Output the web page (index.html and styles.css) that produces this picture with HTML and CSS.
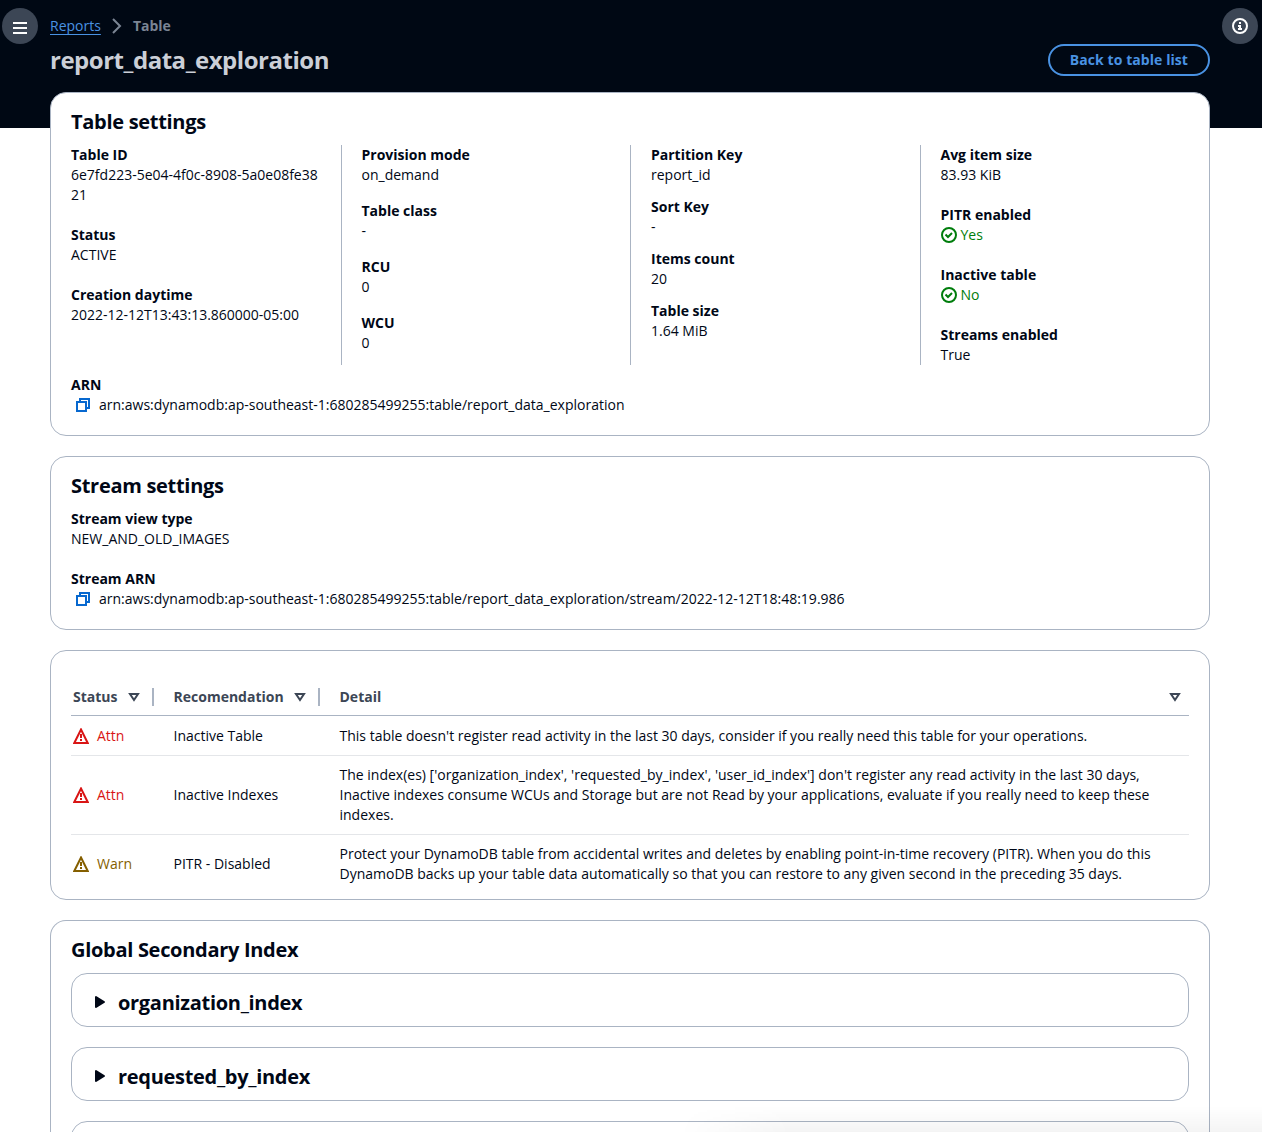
FILE: index.html
```html
<!DOCTYPE html>
<html lang="en">
<head>
<meta charset="utf-8">
<title>report_data_exploration</title>
<link rel="stylesheet" href="styles.css">
</head>
<body>
<svg class="defs" width="0" height="0" aria-hidden="true">
  <symbol id="copy" viewBox="0 0 16 16"><path d="M2 5h9v9H2z"/><path d="M5 5V2h9v9h-3"/></symbol>
  <symbol id="check" viewBox="0 0 16 16"><circle cx="8" cy="8" r="7"/><path d="m4.5 7.5 2.5 2.5 4-4"/></symbol>
  <symbol id="warning" viewBox="0 0 16 16"><path d="m8 1.5 6.7 13.5H1.3L8 1.5Z"/><path d="M8 11v2M8 6v4"/></symbol>
  <symbol id="sort" viewBox="0 0 16 16"><path d="M4 5h8l-4 6-4-6Z"/></symbol>
  <symbol id="caret" viewBox="0 0 16 16"><path d="M4 3v10l8-5z"/></symbol>
</svg>
<header class="top">
  <button class="round menu" aria-label="Open navigation"><svg class="ico" viewBox="0 0 16 16"><path d="M1 3h14M1 8h14M1 13h14"/></svg></button>
  <div class="top-main">
    <nav class="crumbs"><a href="#">Reports</a><svg class="ico" viewBox="0 0 16 16"><path d="m4 1 7 7-7 7"/></svg><b>Table</b></nav>
    <div class="title-row"><h1>report_data_exploration</h1><button class="back">Back to table list</button></div>
  </div>
  <button class="round" aria-label="Open help"><svg class="ico" viewBox="0 0 16 16"><circle cx="8" cy="8" r="7"/><path d="M8 11V8H6M6 11h4M8 4v2"/></svg></button>
</header>
<main>
  <section class="card">
    <h2>Table settings</h2>
    <div class="columns">
      <dl>
        <div><dt>Table ID</dt><dd>6e7fd223-5e04-4f0c-8908-5a0e08fe3821</dd></div>
        <div><dt>Status</dt><dd>ACTIVE</dd></div>
        <div><dt>Creation daytime</dt><dd>2022-12-12T13:43:13.860000-05:00</dd></div>
      </dl>
      <dl class="medium">
        <div><dt>Provision mode</dt><dd>on_demand</dd></div>
        <div><dt>Table class</dt><dd>-</dd></div>
        <div><dt>RCU</dt><dd>0</dd></div>
        <div><dt>WCU</dt><dd>0</dd></div>
      </dl>
      <dl class="small">
        <div><dt>Partition Key</dt><dd>report_id</dd></div>
        <div><dt>Sort Key</dt><dd>-</dd></div>
        <div><dt>Items count</dt><dd>20</dd></div>
        <div><dt>Table size</dt><dd>1.64 MiB</dd></div>
      </dl>
      <dl>
        <div><dt>Avg item size</dt><dd>83.93 KiB</dd></div>
        <div><dt>PITR enabled</dt><dd class="ok"><svg class="ico"><use href="#check"/></svg>Yes</dd></div>
        <div><dt>Inactive table</dt><dd class="ok"><svg class="ico"><use href="#check"/></svg>No</dd></div>
        <div><dt>Streams enabled</dt><dd>True</dd></div>
      </dl>
    </div>
    <dl class="arn"><div><dt>ARN</dt><dd class="copy"><svg class="ico"><use href="#copy"/></svg>arn:aws:dynamodb:ap-southeast-1:680285499255:table/report_data_exploration</dd></div></dl>
  </section>
  <section class="card">
    <h2>Stream settings</h2>
    <dl>
      <div><dt>Stream view type</dt><dd>NEW_AND_OLD_IMAGES</dd></div>
      <div><dt>Stream ARN</dt><dd class="copy"><svg class="ico"><use href="#copy"/></svg>arn:aws:dynamodb:ap-southeast-1:680285499255:table/report_data_exploration/stream/2022-12-12T18:48:19.986</dd></div>
    </dl>
  </section>
  <section class="card findings">
    <table>
      <colgroup><col class="c-status"><col class="c-rec"><col></colgroup>
      <thead><tr>
        <th><div>Status<svg class="ico"><use href="#sort"/></svg></div></th>
        <th><div>Recomendation<svg class="ico"><use href="#sort"/></svg></div></th>
        <th><div>Detail<svg class="ico"><use href="#sort"/></svg></div></th>
      </tr></thead>
      <tbody>
        <tr><td><span class="state attn"><svg class="ico"><use href="#warning"/></svg>Attn</span></td><td>Inactive Table</td><td>This table doesn't register read activity in the last 30 days, consider if you really need this table for your operations.</td></tr>
        <tr><td><span class="state attn"><svg class="ico"><use href="#warning"/></svg>Attn</span></td><td>Inactive Indexes</td><td>The index(es) ['organization_index', 'requested_by_index', 'user_id_index'] don't register any read activity in the last 30 days, Inactive indexes consume WCUs and Storage but are not Read by your applications, evaluate if you really need to keep these indexes.</td></tr>
        <tr><td><span class="state warn"><svg class="ico"><use href="#warning"/></svg>Warn</span></td><td>PITR - Disabled</td><td>Protect your DynamoDB table from accidental writes and deletes by enabling point-in-time recovery (PITR). When you do this DynamoDB backs up your table data automatically so that you can restore to any given second in the preceding 35 days.</td></tr>
      </tbody>
    </table>
  </section>
  <section class="card indexes">
    <h2>Global Secondary Index</h2>
    <div class="index"><svg class="caret"><use href="#caret"/></svg>organization_index</div>
    <div class="index"><svg class="caret"><use href="#caret"/></svg>requested_by_index</div>
    <div class="index cut"></div>
  </section>
</main>
<div class="shade"></div>
</body>
</html>
```
FILE: styles.css
```css
* { box-sizing: border-box; }
body {
  margin: 0;
  height: 1132px;
  overflow: hidden;
  position: relative;
  background: linear-gradient(#000814 128px, #fff 128px);
  color: #000716;
  font: 14px/20px "Open Sans", sans-serif;
}
h1, h2, dl, dd { margin: 0; }
.defs { position: absolute; }
.ico {
  width: 16px;
  height: 16px;
  flex: none;
  fill: none;
  stroke: currentColor;
  stroke-width: 2;
}
.top {
  display: flex;
  justify-content: space-between;
  height: 92px;
  padding: 8px 4px 0 2px;
}
.round {
  display: flex;
  align-items: center;
  justify-content: center;
  width: 36px;
  height: 36px;
  padding: 0;
  border: 0;
  border-radius: 50%;
  background: #3c4655;
  color: #fff;
}
.menu { padding-top: 4px; }
.top-main { width: 1160px; padding-top: 8px; }
.crumbs { display: flex; align-items: center; color: #7b8594; }
.crumbs a { color: #4992e3; text-decoration: underline; text-underline-offset: 3px; }
.crumbs .ico { margin: 0 8px; }
.title-row { display: flex; justify-content: space-between; margin-top: 8px; }
h1 { font-size: 24px; line-height: 30px; color: #cbcfd7; padding-top: 1px; letter-spacing: -.48px; }
.back {
  height: 32px;
  padding: 0 20px;
  border: 2px solid #4992e3;
  border-radius: 20px;
  background: none;
  color: #4992e3;
  font: 700 14px/20px "Open Sans", sans-serif;
  letter-spacing: .07px;
}
main { width: 1160px; margin-left: 50px; display: flex; flex-direction: column; gap: 20px; }
.card {
  border: 1px solid #aab4c3;
  border-radius: 16px;
  background: #fff;
  padding: 16px 20px 20px;
}
h2 { font-size: 20px; line-height: 24px; margin-bottom: 12px; padding-top: 1px; height: 24px; letter-spacing: -.3px; }
dl { display: flex; flex-direction: column; gap: 20px; }
dt { font-weight: 700; }
.columns { display: grid; grid-template-columns: repeat(4, 1fr); margin: 0 -20px; }
.columns dl { padding: 0 20px; border-left: 1px solid #aab4c3; word-break: break-all; }
.columns dl:first-child { border-left: 0; }
.columns .medium { gap: 16px; }
.columns .small { gap: 12px; }
.ok { display: flex; align-items: center; gap: 4px; color: #007d0c; }
.arn { margin-top: 10px; }
.copy { display: flex; align-items: center; gap: 8px; padding-left: 4px; }
.copy .ico { color: #0768cf; }
.findings { height: 250px; padding-top: 25px; }
table { width: 100%; table-layout: fixed; border-collapse: separate; border-spacing: 0; }
.c-status { width: 82.5px; }
.c-rec { width: 166px; }
th { height: 40px; padding: 3px 0 0; border-bottom: 1px solid #aab4c3; color: #3c4655; text-align: left; }
th div {
  display: flex;
  align-items: center;
  justify-content: space-between;
  height: 18px;
  padding: 0 10px 0 20px;
  border-right: 2px solid #aab4c3;
}
th:first-child div { padding-left: 2px; }
th:last-child div { padding-right: 6px; border: 0; }
td { padding: 9px 20px; border-bottom: 1px solid #e4e6e9; vertical-align: middle; }
td:first-child { padding: 9px 0 9px 2px; }
tr:first-child td { padding-top: 10px; }
tr:last-child td { border: 0; }
.state { display: flex; align-items: center; gap: 8px; }
.attn { color: #d91515; }
.warn { color: #855f00; }
.indexes { height: 212px; padding-bottom: 0; border-bottom: 0; border-radius: 16px 16px 0 0; overflow: hidden; }
.index {
  display: flex;
  align-items: center;
  height: 54px;
  margin-bottom: 20px;
  padding: 6px 20px 0;
  border: 1px solid #aab4c3;
  border-radius: 16px;
  font-size: 20px;
  line-height: 24px;
  font-weight: 700;
  letter-spacing: -.3px;
}
.cut { margin: 0; }
.caret { width: 16px; height: 16px; margin: -2px 10px 0 0; fill: #000716; stroke: #000716; stroke-width: 2; stroke-linejoin: round; }
.shade {
  position: absolute;
  left: 680px;
  right: 0;
  bottom: 0;
  height: 26px;
  background: linear-gradient(transparent, rgba(0, 0, 0, .045));
  mask-image: linear-gradient(90deg, transparent, #000 110px);
}
```
